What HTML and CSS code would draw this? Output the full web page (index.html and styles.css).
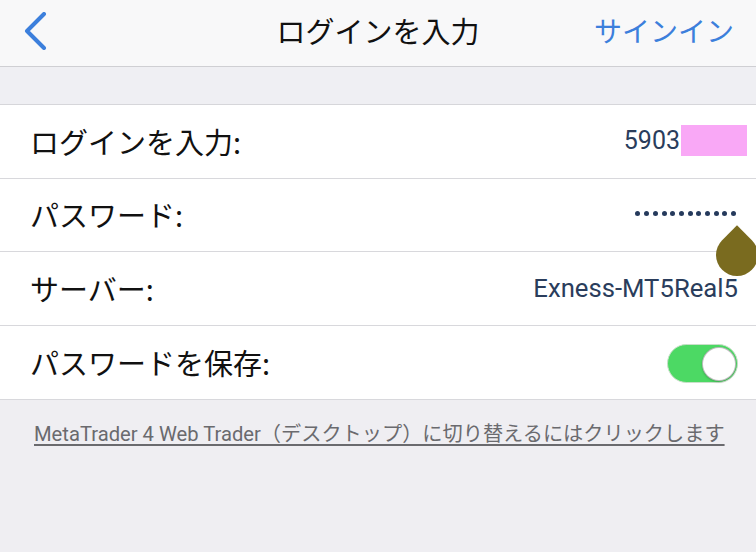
FILE: index.html
```html
<!DOCTYPE html>
<html>
<head>
    <meta charset="UTF-8">
    <link rel="stylesheet" href="styles.css">
</head>
<body>
    <div id="page">
        <div id="header">
            <svg class="back" width="26" height="38" viewBox="0 0 26 38">
                <path d="M22 2 L5 19 L22 36" fill="none" stroke="#3c7fdc" stroke-width="4" stroke-linecap="round" stroke-linejoin="round"/>
            </svg>
            <div class="title">ログインを入力</div>
            <div class="signin">サインイン</div>
        </div>
        <div id="band"></div>
        <div id="rows">
            <div class="row">
                <span class="label">ログインを入力:</span>
                <span class="value">5903<span class="mask"></span></span>
            </div>
            <div class="row">
                <span class="label">パスワード:</span>
                <span class="dots" id="dots">
                    <!-- filled below -->
                </span>
            </div>
            <div class="row">
                <span class="label">サーバー:</span>
                <span class="value server">Exness-MT5Real5</span>
            </div>
            <div class="row">
                <span class="label">パスワードを保存:</span>
                <span class="toggle"><span class="knob"></span></span>
            </div>
        </div>
        <div id="footer">
            <a class="switch">MetaTrader 4 Web Trader（デスクトップ）に切り替えるにはクリックします</a>
        </div>
        <div class="drop"></div>
    </div>
    <script type="text/javascript" charset="UTF-8">
        let dots = document.getElementById("dots");
        for(let i = 0; i < 12; i++) {
            let dot = document.createElement('span');
            dots.appendChild(dot);
        }
    </script>
</body>
</html>
```

FILE: styles.css
```css
body {
    margin: 0;
    overflow: hidden;
    font-family: "Noto Sans CJK JP", "Noto Sans", sans-serif;
}

#page {
    position: relative;
    width: 756px;
    height: 552px;
    background: #efeef2;
}

#header {
    height: 66px;
    background: #f8f8f9;
    border-bottom: 1px solid #cfcfd3;
    display: grid;
    grid-template-columns: 1fr auto 1fr;
    align-items: center;
    padding: 0 22px 0 22px;
}

#header .back {
    margin-top: -4px;
}

#header .title {
    font-size: 29px;
    color: #111;
    margin-top: -6px;
}

#header .signin {
    justify-self: end;
    font-size: 28px;
    color: #3c7fdc;
    margin-top: -6px;
}

#band {
    height: 37px;
    background: #efeff3;
    border-bottom: 1px solid #d6d6da;
}

#rows {
    background: #fff;
}

.row {
    height: 73px;
    border-bottom: 1px solid #d8d8dc;
    display: flex;
    align-items: center;
    justify-content: space-between;
    padding: 0 18px 0 30px;
}

.row:nth-child(2) {
    height: 72px;
}

.label {
    font-size: 29px;
    color: #111;
    margin-top: -2px;
}

.value {
    font-family: Roboto, sans-serif;
    font-size: 25px;
    color: #2a3d5c;
    display: flex;
    align-items: center;
    margin-top: -2px;
}

.value.server {
    font-size: 25.7px;
}

.mask {
    display: inline-block;
    width: 66px;
    height: 31px;
    background: #f9a8f6;
    margin-left: 1px;
    margin-right: -9px;
}

.dots {
    display: flex;
    gap: 3.7px;
    margin-top: -3px;
    margin-right: 2px;
}

.dots > span {
    width: 5px;
    height: 5px;
    border-radius: 50%;
    background: #253a5c;
}

.toggle {
    width: 71px;
    height: 39px;
    border-radius: 20px;
    background: #4cd964;
    border: 1px solid #c9dfc9;
    display: flex;
    align-items: center;
    justify-content: flex-end;
    padding: 0 2px;
    box-sizing: border-box;
    margin-top: 2px;
}

.toggle .knob {
    width: 32px;
    height: 32px;
    border-radius: 50%;
    background: #fff;
    box-shadow: 0 0 0 1px #bdbdbd, 0 1px 3px rgba(0, 0, 0, 0.45);
}

#footer {
    padding: 18px 0 0 34px;
}

.switch {
    font-family: Roboto, "Noto Sans CJK JP", sans-serif;
    font-size: 20.2px;
    color: #6a6a6e;
    text-decoration: underline;
    text-underline-offset: 3px;
}

.drop {
    position: absolute;
    left: 716px;
    top: 230px;
    width: 42px;
    height: 42px;
    background: #7a6b1f;
    border-radius: 50% 0 50% 50%;
    transform: rotate(-45deg);
    transform-origin: center;
    margin-top: 4px;
}
```
